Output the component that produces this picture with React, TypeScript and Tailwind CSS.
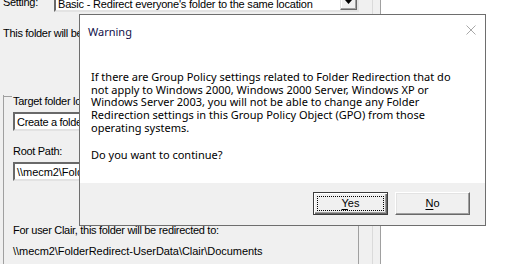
export default function App() {
  return (
    <div className="relative w-[518px] h-[264px] overflow-hidden bg-white font-['Liberation_Sans',Arial,sans-serif] text-[11px] leading-[13px] text-black tracking-[-0.3px]">
      {/* Background property page */}
      <div className="flex h-full">
        <div className="w-[373px] h-full bg-[#f0f0f0] border-r border-[#dadada]">
          {/* Setting row */}
          <div className="flex items-start -mt-[9px] h-[21px]">
            <div className="w-[54px] pl-[3px] pt-[5px]">Setting:</div>
            <div className="w-[305px] h-[21px] flex bg-white border-2 border-t-[#696969] border-l-[#696969] border-r-[#e3e3e3] border-b-[#e3e3e3]">
              <div className="flex-1 pl-[2px] pt-[5px] whitespace-nowrap overflow-hidden tracking-[-0.2px]">
                Basic - Redirect everyone's folder to the same location
              </div>
              <div className="w-[17px] h-[17px] flex items-center justify-center bg-[#f0f0f0] border-t border-l border-[#e3e3e3] border-r border-b border-r-[#696969] border-b-[#696969] shadow-[inset_-1px_-1px_#a0a0a0,inset_1px_1px_#fff]">
                <svg width="7" height="4" viewBox="0 0 7 4" className="mt-[1px]">
                  <path d="M0 0H7L3.5 4Z" fill="#000" />
                </svg>
              </div>
            </div>
          </div>

          <div className="mt-[15px] pl-[3px] whitespace-nowrap">This folder will be redirected to the specified location.</div>

          {/* Group box */}
          <div className="mt-[55px] ml-[3px] w-[356px] h-[200px] border-l border-r border-[#a0a0a0]">
            <div className="flex items-start h-[13px]">
              <div className="w-[8px] h-px mt-[1px] bg-[#a0a0a0]" />
              <div className="px-[1px] whitespace-nowrap">Target folder location</div>
              <div className="flex-1 h-px mt-[1px] bg-[#a0a0a0]" />
            </div>
            <div className="pl-[9px] pr-[9px]">
              <div className="mt-[4px] h-[19px] bg-white border-2 border-t-[#696969] border-l-[#696969] border-r-[#e3e3e3] border-b-[#e3e3e3] pl-[2px] pt-[2px] whitespace-nowrap overflow-hidden">
                Create a folder for each user under the root path
              </div>
              <div className="mt-[14px] h-[13px]">Root Path:</div>
              <div className="mt-[4px] h-[19px] bg-white border-2 border-t-[#696969] border-l-[#696969] border-r-[#e3e3e3] border-b-[#e3e3e3] pl-[2px] pt-[2px] whitespace-nowrap overflow-hidden tracking-[-0.05px]">
                \\mecm2\FolderRedirect-UserData
              </div>
              <div className="mt-[43px] whitespace-nowrap">For user Clair, this folder will be redirected to:</div>
              <div className="mt-[8px] whitespace-nowrap tracking-[-0.05px]">\\mecm2\FolderRedirect-UserData\Clair\Documents</div>
            </div>
          </div>
        </div>
        <div className="w-[8px] h-full bg-[#f0f0f0] border-r border-[#a0a0a0]" />
      </div>

      {/* Warning dialog */}
      <div className="absolute left-[79px] top-[14px] w-[407px] h-[212px] border border-[#6e6e6e] bg-white flex flex-col font-['Noto_Sans',sans-serif] text-[11px] tracking-normal">
        <div className="h-[168px] flex flex-col">
          <div className="flex justify-between items-start pl-[8px] pr-[9px] pt-[9px]">
            <div className="leading-[16px] text-[#10104a]">Warning</div>
            <svg width="10" height="10" viewBox="0 0 10 10" className="mt-[1px]">
              <path d="M0.5 0.5L9.5 9.5M9.5 0.5L0.5 9.5" stroke="#a8a8a8" strokeWidth="1" />
            </svg>
          </div>
          <div className="pl-[11px] mt-[31px] leading-[12.7px]">
            If there are Group Policy settings related to Folder Redirection that do<br />
            not apply to Windows 2000, Windows 2000 Server, Windows XP or<br />
            Windows Server 2003, you will not be able to change any Folder<br />
            Redirection settings in this Group Policy Object (GPO) from those<br />
            operating systems.
          </div>
          <div className="pl-[11px] mt-[14px] leading-[12.7px]">Do you want to continue?</div>
        </div>
        <div className="flex-1 bg-[#f0f0f0] flex justify-end items-start gap-[7px] pt-[9px] pr-[15px] font-['Liberation_Sans',Arial,sans-serif] text-[11px]">
          <button className="w-[75px] h-[23px] bg-[#f0f0f0] border border-[#3c3c3c] shadow-[inset_1px_1px_#fff,inset_-1px_-1px_#696969,inset_-2px_-2px_#a0a0a0] outline-1 outline-dotted outline-black outline-offset-[-5px] leading-[13px]">
            <span className="underline underline-offset-2">Y</span>es
          </button>
          <button className="w-[75px] h-[23px] bg-[#f0f0f0] border border-t-white border-l-white border-r-[#696969] border-b-[#696969] shadow-[inset_-1px_-1px_#a0a0a0,inset_1px_1px_#e3e3e3] leading-[13px]">
            <span className="underline underline-offset-2">N</span>o
          </button>
        </div>
      </div>
    </div>
  )
}
